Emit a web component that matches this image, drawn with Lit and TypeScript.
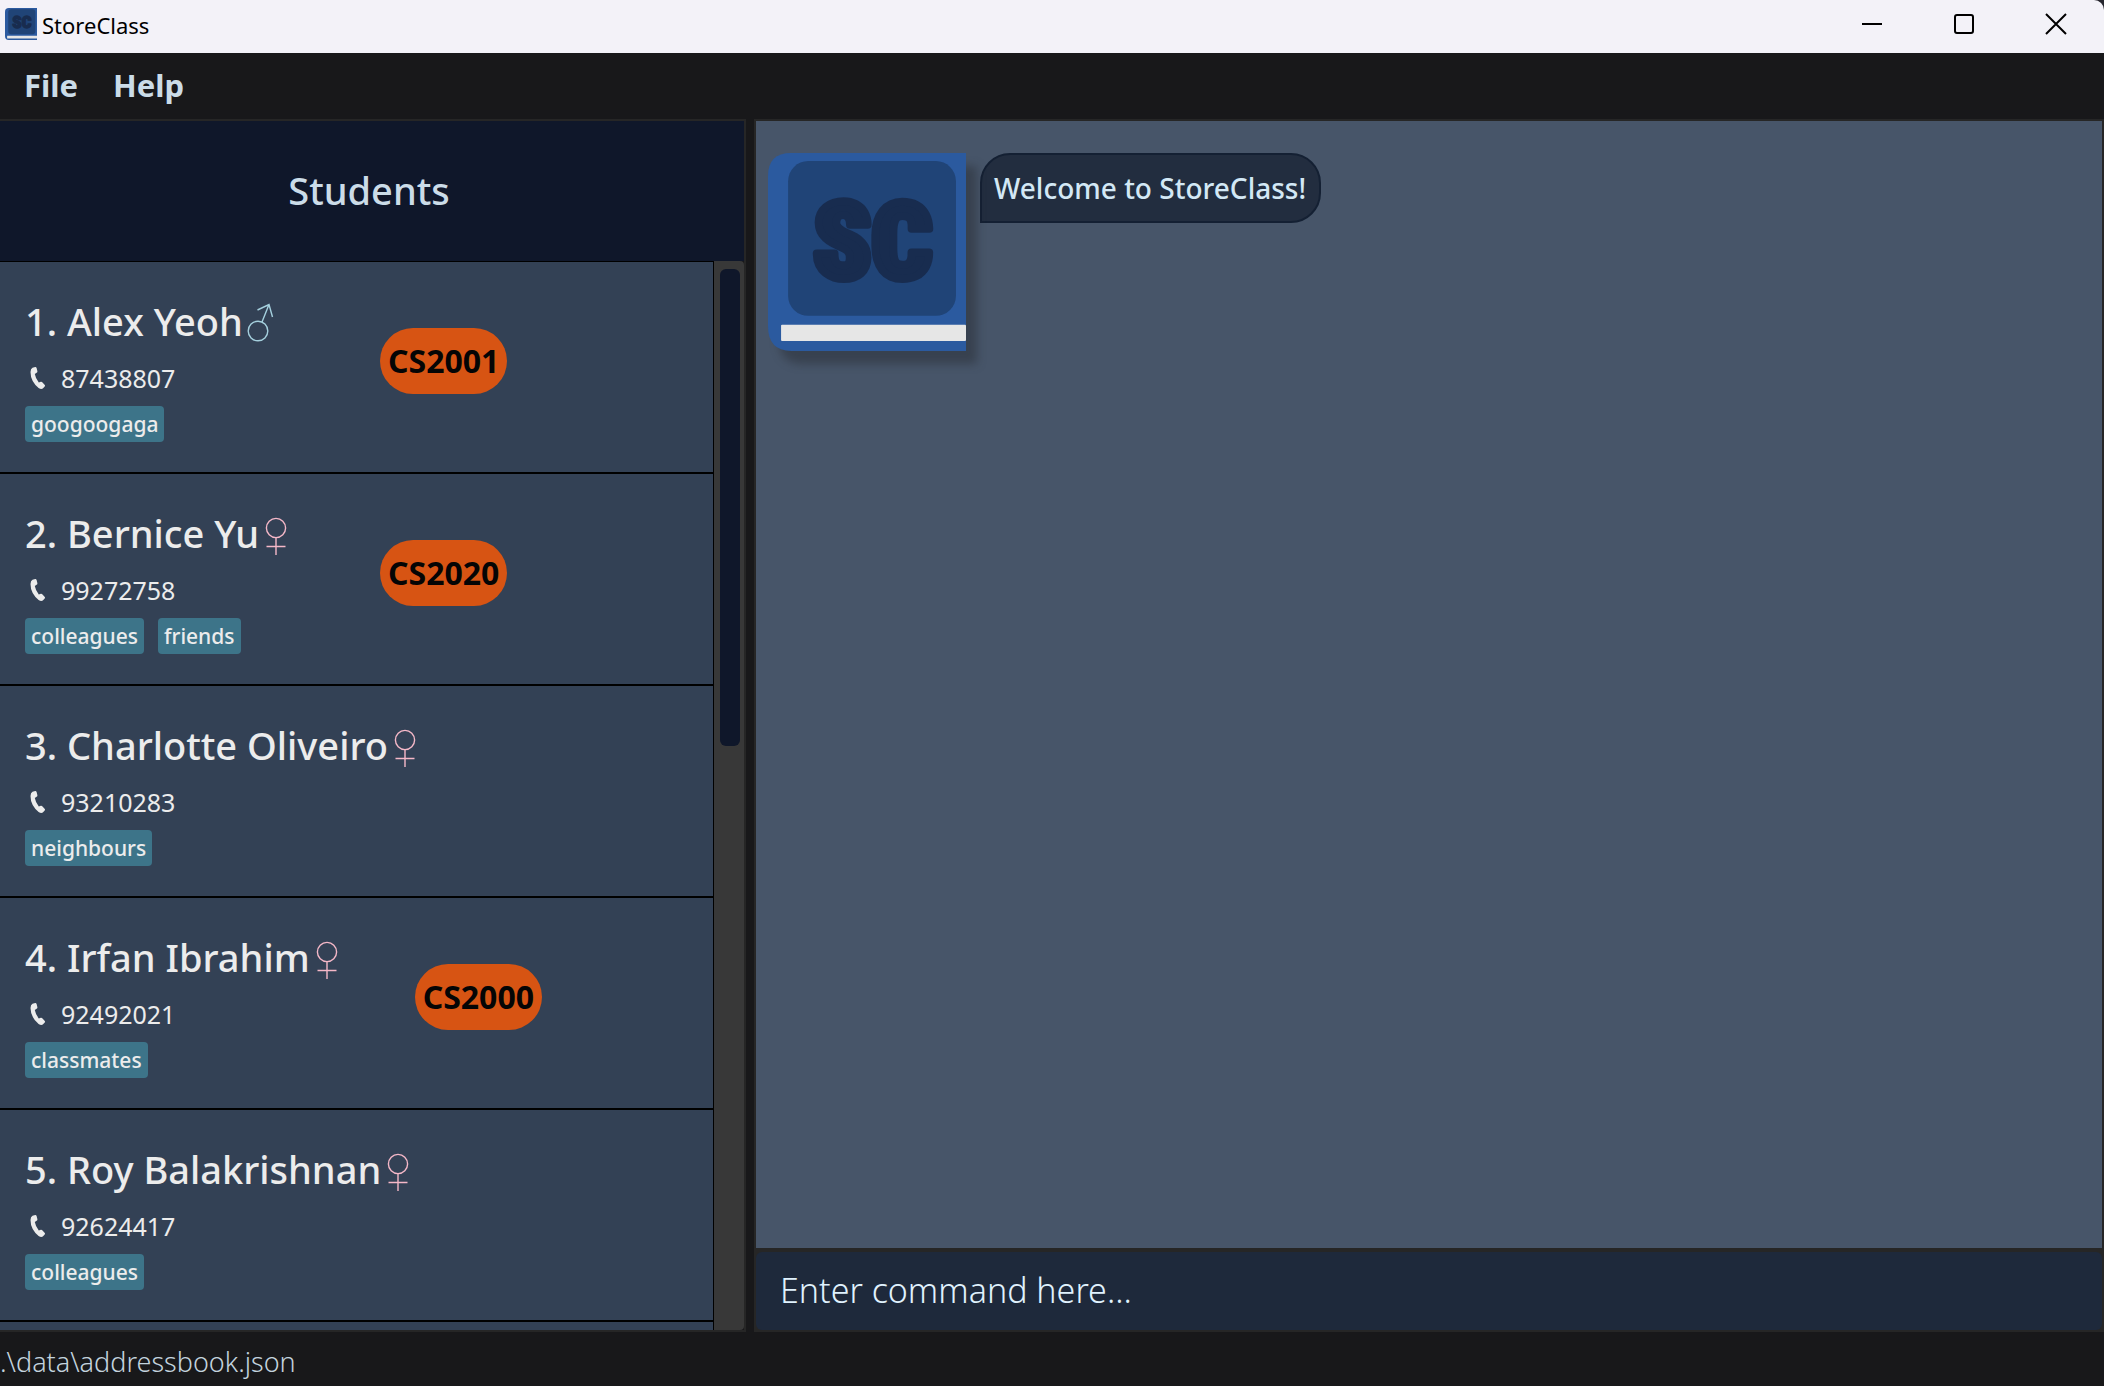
import { LitElement, html, css, svg, nothing } from "lit";
import { customElement, property, state } from "lit/decorators.js";

interface Student {
  name: string;
  gender: "male" | "female";
  phone: string;
  tags: string[];
  module?: string;
}

const STUDENTS: Student[] = [
  { name: "Alex Yeoh", gender: "male", phone: "87438807", tags: ["googoogaga"], module: "CS2001" },
  { name: "Bernice Yu", gender: "female", phone: "99272758", tags: ["colleagues", "friends"], module: "CS2020" },
  { name: "Charlotte Oliveiro", gender: "female", phone: "93210283", tags: ["neighbours"] },
  { name: "Irfan Ibrahim", gender: "female", phone: "92492021", tags: ["classmates"], module: "CS2000" },
  { name: "Roy Balakrishnan", gender: "female", phone: "92624417", tags: ["colleagues"] },
];

@customElement("store-logo")
export class StoreLogo extends LitElement {
  static styles = css`
    :host {
      display: block;
    }
    .mark {
      display: block;
      width: 100%;
      height: 100%;
    }
    .initials {
      font-family: "Roboto Condensed", "Open Sans", sans-serif;
      font-weight: 900;
      font-size: 105px;
      fill: #182c4f;
      stroke: #182c4f;
      stroke-width: 8px;
      stroke-linejoin: round;
      text-anchor: middle;
    }
  `;

  render() {
    return html`<svg class="mark" viewBox="0 0 197 197" role="img" aria-label="StoreClass logo">
      <path d="M197 0H23Q0 0 0 23V172Q0 197 23 197H197Z" fill="#2b5a9f" />
      <rect x="20" y="8" width="167" height="154" rx="20" fill="#204477" />
      <text class="initials" x="104" y="124">SC</text>
      <rect x="13" y="171" width="184" height="16" rx="1" fill="#e6e6e6" />
    </svg>`;
  }
}

@customElement("student-card")
export class StudentCard extends LitElement {
  @property({ type: Number }) index = 1;
  @property({ attribute: false }) student!: Student;

  static styles = css`
    :host {
      display: flex;
      align-items: flex-start;
      gap: 73px;
      box-sizing: border-box;
      height: 212px;
      padding: 33px 24px 0 25px;
      border: 1px solid #000;
      border-left: 0;
      background: #334155;
      color: #ececec;
      white-space: nowrap;
    }
    .details {
      display: grid;
      justify-items: start;
      min-width: 282px;
    }
    .heading {
      display: flex;
      align-items: flex-start;
      margin: 0;
      font-size: 38px;
      line-height: 52px;
      font-weight: 500;
    }
    .gender {
      width: 32px;
      height: 40px;
      margin-top: 8px;
      fill: none;
      stroke-width: 1.4;
    }
    .male {
      stroke: #a5d0de;
    }
    .female {
      stroke: #f5b8c8;
    }
    .phone {
      display: flex;
      align-items: center;
      gap: 15px;
      height: 34px;
      margin: 14px 0 11px 5px;
      font-size: 25px;
      line-height: 34px;
    }
    .handset {
      width: 16px;
      height: 24px;
      fill: #ececec;
    }
    .tags {
      display: flex;
      gap: 14px;
      margin: 0;
      padding: 0;
      list-style: none;
    }
    .tag {
      padding: 0 6px;
      border-radius: 4px;
      background: #3d7489;
      font-size: 21px;
      line-height: 36px;
      font-weight: 500;
    }
    .module {
      margin-top: 33px;
      padding: 0 8px;
      border-radius: 33px;
      background: #d75413;
      color: #050505;
      font-size: 32px;
      line-height: 66px;
      font-weight: 700;
    }
  `;

  private genderIcon() {
    const male = this.student.gender === "male";
    return html`<svg class="gender ${this.student.gender}" viewBox="0 0 32 40" role="img" aria-label=${this.student.gender}>
      ${male
        ? svg`<circle cx="15" cy="28" r="9.8"/><path d="M19 19 26 1.500M14.500 7 26 1.500 29.500 14"/>`
        : svg`<circle cx="17" cy="13" r="9.600"/><path d="M17 22.600V40M7.500 31.500H26.500"/>`}
    </svg>`;
  }

  render() {
    const s = this.student;
    return html`
      <div class="details">
        <h2 class="heading"><span>${this.index}. ${s.name}</span>${this.genderIcon()}</h2>
        <p class="phone">
          <svg class="handset" viewBox="0 0 16 24" aria-hidden="true">
            <path d="M2.500 1.800 5.200 1Q6.200.9 6.600 2L7.400 5.200Q7.500 6.200 6.600 6.800L4.800 8Q5.600 12.600 8.800 16.400L10.800 15.800Q11.800 15.600 12.500 16.400L14.800 18.900Q15.400 19.800 14.700 20.600L12.800 22.400Q11.200 23.600 8.600 21.900Q.6 15.500.5 6Q.6 2.800 2.500 1.800Z" />
          </svg>
          <span>${s.phone}</span>
        </p>
        <ul class="tags">
          ${s.tags.map((t) => html`<li class="tag">${t}</li>`)}
        </ul>
      </div>
      ${s.module ? html`<span class="module">${s.module}</span>` : nothing}
    `;
  }
}

@customElement("app-root")
export class AppRoot extends LitElement {
  @state() private command = "";

  static styles = css`
    :host {
      display: flex;
      flex-direction: column;
      height: 100vh;
      background: #18181a;
      color: #cbdce8;
      font-family: "Noto Sans", "Open Sans", sans-serif;
    }
    .titlebar {
      display: flex;
      align-items: center;
      height: 53px;
      background: #26262e;
    }
    .titlebar-inner {
      display: flex;
      flex: 1;
      align-items: center;
      height: 100%;
      padding: 0 2px 0 5px;
      border-top-right-radius: 10px;
      background: #f3f2f8;
    }
    .app-icon {
      width: 32px;
      height: 32px;
      margin: 0 5px 5px 0;
    }
    .app-title {
      flex: 1;
      margin: 0 0 4px;
      color: #000;
      font-size: 22px;
      line-height: 30px;
      font-weight: 400;
    }
    .window-button {
      display: grid;
      place-items: center;
      width: 92px;
      height: 48px;
      margin-bottom: 5px;
      padding: 0;
      border: 0;
      background: none;
    }
    .window-glyph {
      width: 22px;
      height: 22px;
      fill: none;
      stroke: #000;
      stroke-width: 2;
    }
    .menubar {
      display: flex;
      gap: 35px;
      height: 66px;
      padding-left: 24px;
    }
    .menu {
      padding: 0 0 2px;
      border: 0;
      background: none;
      color: inherit;
      font: 700 31px/64px "Noto Sans", "Open Sans", sans-serif;
    }
    .workspace {
      display: grid;
      grid-template-columns: minmax(0, 746fr) 8px minmax(0, 1350fr);
      flex: 1;
      min-height: 0;
    }
    .students {
      display: flex;
      flex-direction: column;
      min-height: 0;
      border: 2px solid #262626;
      border-left: 0;
    }
    .students-title {
      margin: 0;
      padding: 0 6px 2px 0;
      background: #0f172a;
      font-size: 38px;
      line-height: 138px;
      font-weight: 500;
      text-align: center;
    }
    .scroller {
      display: flex;
      flex: 1;
      min-height: 0;
      border-radius: 0 4px 4px 0;
      background: #383838;
    }
    .list {
      display: flex;
      flex: 1;
      flex-direction: column;
      margin: 0;
      padding: 0;
      overflow: hidden;
      list-style: none;
    }
    .row {
      flex: none;
    }
    .row-rest {
      flex: 1;
      border: 1px solid #000;
      border-width: 1px 1px 0 0;
      background: #334155;
    }
    .scrollbar {
      box-sizing: border-box;
      width: 30px;
      padding: 8px 4px 8px 6px;
    }
    .thumb {
      height: 45.3%;
      border-radius: 6px;
      background: #0f172a;
    }
    .console {
      display: flex;
      flex-direction: column;
      min-height: 0;
      border: 2px solid #262626;
      background: #262626;
    }
    .chat {
      display: flex;
      flex: 1;
      align-items: flex-start;
      gap: 14px;
      padding: 32px 12px;
      background: #475569;
    }
    .avatar {
      width: 198px;
      height: 198px;
      filter: drop-shadow(11px 13px 5px rgba(32, 34, 40, 0.4));
    }
    .bubble {
      margin: 0;
      padding: 0 13px 0 12px;
      border: 2px solid #142033;
      border-radius: 30px 30px 30px 0;
      background: #222d3f;
      color: #d3e8f5;
      font-size: 28px;
      line-height: 66px;
      font-weight: 500;
    }
    .command {
      box-sizing: border-box;
      width: 100%;
      height: 78px;
      margin-top: 4px;
      padding: 0 24px 2px;
      border: 0;
      border-radius: 6px;
      outline: none;
      background: #1e293b;
      color: #e0f2fe;
      font: 300 34px/48px "Noto Sans", "Open Sans", sans-serif;
    }
    .command::placeholder {
      color: #e0f2fe;
      opacity: 1;
    }
    .statusbar {
      height: 54px;
      color: #c3d3de;
      font-size: 27px;
      line-height: 60px;
      font-weight: 300;
    }
  `;

  private onInput(e: InputEvent) {
    this.command = (e.target as HTMLInputElement).value;
  }

  render() {
    return html`
      <header class="titlebar">
        <div class="titlebar-inner">
          <store-logo class="app-icon"></store-logo>
          <h1 class="app-title">StoreClass</h1>
          <button class="window-button" aria-label="Minimize">
            <svg class="window-glyph" viewBox="0 0 22 22"><path d="M1 11H21" /></svg>
          </button>
          <button class="window-button" aria-label="Maximize">
            <svg class="window-glyph" viewBox="0 0 22 22"><rect x="2" y="2" width="18" height="18" rx="2" /></svg>
          </button>
          <button class="window-button" aria-label="Close">
            <svg class="window-glyph" viewBox="0 0 22 22"><path d="M1 1 21 21M21 1 1 21" /></svg>
          </button>
        </div>
      </header>
      <nav class="menubar">
        <button class="menu">File</button>
        <button class="menu">Help</button>
      </nav>
      <main class="workspace">
        <section class="students">
          <h2 class="students-title">Students</h2>
          <div class="scroller">
            <ul class="list">
              ${STUDENTS.map(
                (s, i) => html`<li class="row"><student-card .index=${i + 1} .student=${s}></student-card></li>`,
              )}
              <li class="row-rest" aria-hidden="true"></li>
            </ul>
            <div class="scrollbar"><div class="thumb"></div></div>
          </div>
        </section>
        <div></div>
        <section class="console">
          <div class="chat">
            <store-logo class="avatar"></store-logo>
            <p class="bubble">Welcome to StoreClass!</p>
          </div>
          <input
            class="command"
            type="text"
            aria-label="Command"
            placeholder="Enter command here..."
            .value=${this.command}
            @input=${this.onInput}
          />
        </section>
      </main>
      <footer class="statusbar">.\\data\\addressbook.json</footer>
    `;
  }
}
